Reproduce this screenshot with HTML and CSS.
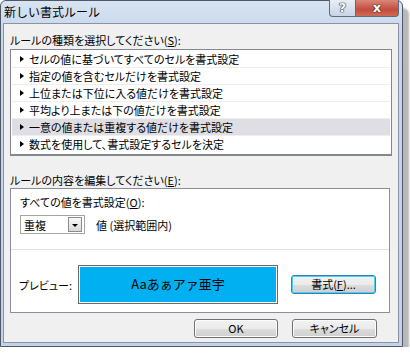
FILE: index.html
```html
<!DOCTYPE html>
<html lang="ja">
<head>
    <meta charset="UTF-8">
    <title>新しい書式ルール</title>
    <link rel="stylesheet" href="styles.css">
</head>
<body>
    <div class="window">
        <div class="titlebar">
            <span class="title">新しい書式ルール</span>
            <div class="caption-buttons">
                <span class="cap-btn help">?</span>
                <span class="cap-btn close">x</span>
            </div>
        </div>
        <div class="client">
            <p class="label">ルールの種類を選択してください(<u>S</u>):</p>
            <ul class="rule-list">
                <li>セルの値に基づいてすべてのセルを書式設定</li>
                <li>指定の値を含むセルだけを書式設定</li>
                <li>上位または下位に入る値だけを書式設定</li>
                <li>平均より上または下の値だけを書式設定</li>
                <li class="selected">一意の値または重複する値だけを書式設定</li>
                <li>数式を使用して、書式設定するセルを決定</li>
            </ul>

            <p class="label second">ルールの内容を編集してください(<u>E</u>):</p>
            <div class="rule-box">
                <div class="rule-top">
                    <p class="box-text">すべての値を書式設定(<u>O</u>):</p>
                    <div class="combo-row">
                        <div class="combo">
                            <span class="combo-value">重複</span>
                            <span class="combo-btn"><i class="down"></i></span>
                        </div>
                        <span class="combo-after">値 (選択範囲内)</span>
                    </div>
                </div>
                <div class="preview-row">
                    <span class="preview-label">プレビュー:</span>
                    <div class="preview">
                        <div class="preview-inner">Aaあぁアァ亜宇</div>
                    </div>
                    <button class="btn default">書式(<u>F</u>)...</button>
                </div>
            </div>

            <div class="footer">
                <button class="btn">OK</button>
                <button class="btn">キャンセル</button>
            </div>
        </div>
    </div>
</body>
</html>
```

FILE: styles.css
```css
body {
    margin: 0;
    padding: 0;
    background: #fff;
    font-family: "Noto Sans CJK JP", "Liberation Sans", sans-serif;
    font-size: 11px;
    color: #000;
}

p {
    margin: 0;
}

u {
    text-decoration: underline;
}

.window {
    width: 401px;
    height: 345px;
    border: 1px solid #4e5866;
    border-radius: 6px 6px 0 0;
    background: linear-gradient(#d8e4f2, #c7d7ec 30px, #c2d3ea);
    box-shadow: 6px 8px 2px rgba(0, 0, 0, 0.28);
    display: flex;
    flex-direction: column;
}

.titlebar {
    height: 22px;
    display: flex;
    align-items: flex-start;
    justify-content: space-between;
}

.title {
    padding-left: 3px;
    line-height: 22px;
    font-size: 12px;
}

.caption-buttons {
    display: flex;
    margin-right: 3px;
    margin-top: -1px;
}

.cap-btn {
    height: 16px;
    line-height: 15px;
    text-align: center;
    color: #fff;
    font-family: "DejaVu Sans", sans-serif;
    font-weight: bold;
    font-size: 13px;
    text-shadow: 0 0 1px #222, 0 0 1px #222, 0 0 1px #222;
    border: 1px solid #5f6b7b;
    border-top: none;
}

.help {
    width: 25px;
    background: linear-gradient(#e6edf6, #c9d5e5);
    border-radius: 0 0 0 4px;
}

.close {
    width: 42px;
    background: linear-gradient(#d9877a, #c44c3d 60%, #d06a55);
    border-left: none;
    border-radius: 0 0 4px 0;
}

.client {
    flex: 1;
    margin: 0 3px 3px 2px;
    border: 1px solid #8893a3;
    background: #f0f0f0;
    padding: 8px 7px 0 6px;
    display: flex;
    flex-direction: column;
    font-feature-settings: "palt";
}

.label {
    line-height: 16px;
    height: 16px;
    margin-bottom: 1px;
}

.label.second {
    height: 14px;
    line-height: 14px;
    margin-top: 17px;
    margin-bottom: 1px;
}

.rule-list {
    list-style: none;
    margin: 0;
    width: 378px;
    padding: 1px 1px 2px 1px;
    border: 1px solid #828790;
    border-bottom-width: 2px;
    background: #fff;
}

.rule-list li {
    height: 16px;
    line-height: 16px;
    border-bottom: 1px solid #eeeeee;
    padding-left: 17px;
    position: relative;
    white-space: nowrap;
}

.rule-list li:last-child {
    border-bottom: none;
}

.rule-list li::before {
    content: "";
    position: absolute;
    left: 8px;
    top: 5px;
    border-left: 4px solid #000;
    border-top: 3px solid transparent;
    border-bottom: 3px solid transparent;
}

.rule-list li.selected {
    background: #dedee4;
}

.rule-box {
    width: 378px;
    height: 123px;
    border: 1px solid #8b8e96;
    background: #fff;
    display: flex;
    flex-direction: column;
}

.rule-top {
    height: 55px;
    padding: 5px 9px 0 9px;
    border-bottom: 1px solid #e2e2e2;
}

.box-text {
    line-height: 16px;
}

.combo-row {
    display: flex;
    align-items: center;
    margin-top: 5px;
}

.combo {
    width: 63px;
    height: 17px;
    border: 1px solid #a5a5a5;
    display: flex;
    align-items: center;
    justify-content: space-between;
}

.combo-value {
    padding-left: 3px;
    line-height: 16px;
}

.combo-btn {
    width: 14px;
    height: 15px;
    margin-right: 2px;
    border: 1px solid #8c8c8c;
    box-sizing: border-box;
    background: linear-gradient(#fafafa, #d9d9d9);
    display: flex;
    align-items: center;
    justify-content: center;
}

.down {
    border-top: 3px solid #000;
    border-left: 3px solid transparent;
    border-right: 3px solid transparent;
    margin-top: 2px;
}

.combo-after {
    margin-left: 11px;
}

.preview-row {
    display: flex;
    align-items: flex-start;
    padding: 15px 0 0 8px;
}

.preview-label {
    width: 59px;
    line-height: 16px;
    margin-top: 12px;
}

.preview {
    width: 196px;
    height: 35px;
    border: 1px solid #6b6b6b;
    padding: 1px;
    background: #fff;
}

.preview-inner {
    height: 35px;
    background: #00b0f0;
    text-align: center;
    line-height: 34px;
    font-size: 13px;
    font-feature-settings: normal;
}

.btn {
    font-family: "Noto Sans CJK JP", "Liberation Sans", sans-serif;
    font-size: 11px;
    font-feature-settings: "palt";
    color: #000;
    padding: 0;
    height: 19px;
    line-height: 15px;
    border: 1px solid #707070;
    border-radius: 3px;
    background: linear-gradient(#f2f2f2 0, #ebebeb 50%, #dddddd 51%, #cfcfcf 100%);
    box-shadow: inset 0 0 0 1px #fcfcfc;
}

.btn.default {
    width: 85px;
    margin: 10px 0 0 13px;
    border-color: #3c7fb1;
    box-shadow: inset 0 0 0 1px #48d1f8;
}

.footer {
    display: flex;
    justify-content: flex-end;
    gap: 14px;
    padding: 6px 14px 0 0;
}

.footer .btn {
    width: 84px;
}

.footer .btn + .btn {
    width: 85px;
}
```
